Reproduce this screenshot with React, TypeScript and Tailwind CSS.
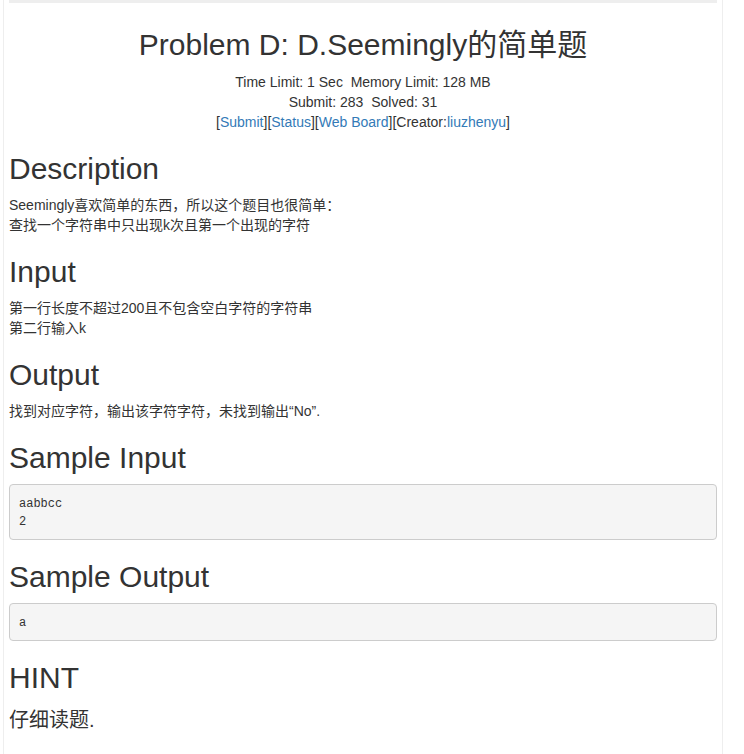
export default function App() {
  const font = { fontFamily: '"Liberation Sans", "Noto Sans CJK SC", sans-serif' };
  return (
    <div className="bg-white min-h-screen">
      <div
        className="ml-[3px] w-[720px] min-h-[754px] border-l border-r border-[#eeeeee] px-[5px] pb-5 text-[#333333] text-[14px] leading-[20px] flow-root"
        style={font}
      >
        <div className="h-[3px] bg-[#eeeeee]"></div>
        <h2 className="mt-[25px] mb-[11px] text-[30px] leading-[33px] font-normal text-center">
          Problem D: D.Seemingly的简单题
        </h2>
        <div className="text-center">
          <div>Time Limit: 1 Sec{"\u00a0\u00a0"}Memory Limit: 128 MB</div>
          <div>Submit: 283{"\u00a0\u00a0"}Solved: 31</div>
          <div>
            [<a className="text-[#337ab7]">Submit</a>][<a className="text-[#337ab7]">Status</a>][
            <a className="text-[#337ab7]">Web Board</a>][Creator:<a className="text-[#337ab7]">liuzhenyu</a>]
          </div>
        </div>

        <h2 className="mt-5 mb-[10px] text-[30px] leading-[33px] font-normal">Description</h2>
        <div>
          <div>Seemingly喜欢简单的东西，所以这个题目也很简单：</div>
          <div>查找一个字符串中只出现k次且第一个出现的字符</div>
        </div>

        <h2 className="mt-5 mb-[10px] text-[30px] leading-[33px] font-normal">Input</h2>
        <div>
          <div>第一行长度不超过200且不包含空白字符的字符串</div>
          <div>第二行输入k</div>
        </div>

        <h2 className="mt-5 mb-[10px] text-[30px] leading-[33px] font-normal">Output</h2>
        <div>找到对应字符，输出该字符字符，未找到输出“No”.</div>

        <h2 className="mt-5 mb-[10px] text-[30px] leading-[33px] font-normal">Sample Input</h2>
        <pre
          className="mb-[10px] px-[9px] pt-[10px] pb-[8px] bg-[#f5f5f5] border border-[#cccccc] rounded-[4px] text-[12px] leading-[18px] text-[#333333] whitespace-pre"
          style={{ fontFamily: '"Liberation Mono", monospace' }}
        >
{`aabbcc
2`}
        </pre>

        <h2 className="mt-5 mb-[10px] text-[30px] leading-[33px] font-normal">Sample Output</h2>
        <pre
          className="mb-[10px] px-[9px] pt-[10px] pb-[8px] bg-[#f5f5f5] border border-[#cccccc] rounded-[4px] text-[12px] leading-[18px] text-[#333333] whitespace-pre"
          style={{ fontFamily: '"Liberation Mono", monospace' }}
        >
{`a`}
        </pre>

        <h2 className="mt-5 mb-[10px] text-[30px] leading-[33px] font-normal">HINT</h2>
        <div className="text-[20px] leading-[32px]">仔细读题.</div>
      </div>
    </div>
  );
}
